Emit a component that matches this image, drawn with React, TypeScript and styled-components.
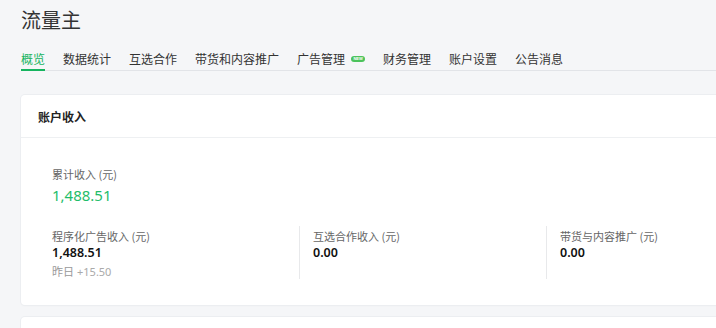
import React from "react";
import styled, { createGlobalStyle } from "styled-components";

const Global = createGlobalStyle`
  html, body { margin: 0; padding: 0; background: #f5f6f8; overflow: hidden; }
  body { font-family: "Noto Sans CJK SC", "Noto Sans", sans-serif; color: #333; }
`;

const Page = styled.div`
  width: 900px;
  padding: 0 0 0 21px;
`;

const Title = styled.h1`
  margin: 0;
  padding-top: 6px;
  font-size: 20px;
  line-height: 28px;
  font-weight: 400;
  color: #333;
`;

const Tabs = styled.nav`
  margin-top: 16px;
  display: flex;
  gap: 18px;
  border-bottom: 1px solid #e2e4e8;
`;

const Tab = styled.div<{ $active?: boolean }>`
  display: flex;
  align-items: center;
  gap: 6px;
  font-size: 12px;
  line-height: 18px;
  color: ${(p) => (p.$active ? "#16b45f" : "#333")};
  box-shadow: ${(p) => (p.$active ? "inset 0 -2px 0 #16b45f" : "none")};
  margin-bottom: -1px;
  padding-bottom: 3px;
`;

const Badge = styled.span`
  display: inline-flex;
  align-items: center;
  justify-content: center;
  width: 14px;
  height: 6px;
  border-radius: 3px;
  background: #4cc35c;
  color: #fff;
  font-family: "Liberation Sans", sans-serif;
  font-size: 4px;
  line-height: 6px;
  font-weight: 700;
  margin-top: -1px;
`;

const Card = styled.section`
  margin-top: 24px;
  width: 820px;
  background: #fff;
  border-radius: 4px;
  box-shadow: 0 0 0 1px #eceef1, 0 1px 2px rgba(0, 0, 0, 0.04);
`;

const CardHeader = styled.header`
  height: 42px;
  display: flex;
  align-items: center;
  padding-left: 17px;
  border-bottom: 1px solid #eef0f2;
  font-size: 12px;
  font-weight: 700;
  color: #222;
`;

const CardBody = styled.div`
  padding: 29px 0 26px 31px;
`;

const Label = styled.div`
  font-size: 11px;
  line-height: 14px;
  color: #666;
`;

const TotalValue = styled.div`
  margin-top: 4px;
  font-family: "Noto Sans", sans-serif;
  font-size: 15px;
  line-height: 20px;
  color: #1fbd6a;
`;

const Grid = styled.div`
  margin-top: 21px;
  display: grid;
  grid-template-columns: 247px 247px 247px;
`;

const Col = styled.div<{ $divider?: boolean }>`
  min-height: 51px;
  padding-top: 3px;
  padding-left: ${(p) => (p.$divider ? "13px" : "0")};
  border-left: ${(p) => (p.$divider ? "1px solid #e8e9eb" : "none")};
  box-sizing: border-box;
`;

const Value = styled.div`
  margin-top: 2px;
  font-family: "Noto Sans", sans-serif;
  font-size: 12.5px;
  line-height: 16px;
  font-weight: 600;
  color: #111;
`;

const Delta = styled.div`
  margin-top: 3px;
  font-size: 11px;
  line-height: 14px;
  color: #999;
  span { font-family: "Noto Sans", sans-serif; color: #aaa; margin-left: 3px; }
`;

const SecondCard = styled.section`
  margin-top: 12px;
  width: 820px;
  height: 40px;
  background: #fff;
  border-radius: 4px;
  box-shadow: 0 0 0 1px #eceef1;
`;

const tabs = ["概览", "数据统计", "互选合作", "带货和内容推广", "广告管理", "财务管理", "账户设置", "公告消息"];

export default function App() {
  return (
    <>
      <Global />
      <Page>
        <Title>流量主</Title>
        <Tabs>
          {tabs.map((t, i) => (
            <Tab key={t} $active={i === 0}>
              {t}
              {t === "广告管理" && <Badge>NEW</Badge>}
            </Tab>
          ))}
        </Tabs>
        <Card>
          <CardHeader>账户收入</CardHeader>
          <CardBody>
            <Label>累计收入 (元)</Label>
            <TotalValue>1,488.51</TotalValue>
            <Grid>
              <Col>
                <Label>程序化广告收入 (元)</Label>
                <Value>1,488.51</Value>
                <Delta>
                  昨日<span>+15.50</span>
                </Delta>
              </Col>
              <Col $divider>
                <Label>互选合作收入 (元)</Label>
                <Value>0.00</Value>
              </Col>
              <Col $divider>
                <Label>带货与内容推广 (元)</Label>
                <Value>0.00</Value>
              </Col>
            </Grid>
          </CardBody>
        </Card>
        <SecondCard />
      </Page>
    </>
  );
}
